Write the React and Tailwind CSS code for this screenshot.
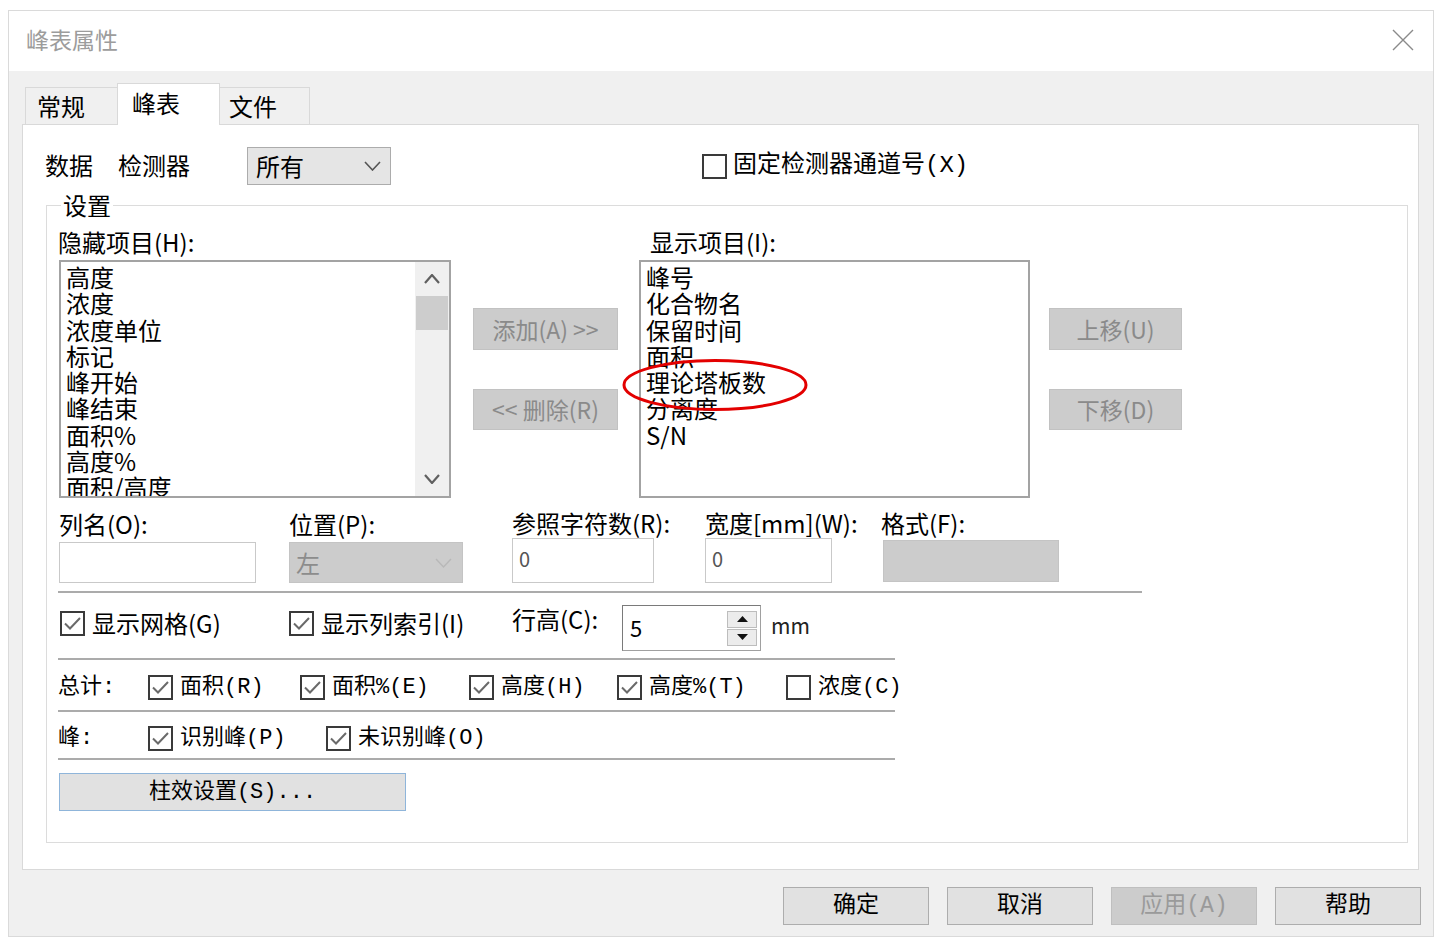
import React from "react";

const MONO = "font-['Liberation_Mono','Noto_Sans_CJK_SC',monospace]";

function CheckBox({ checked }) {
  return (
    <svg width="25" height="25" viewBox="0 0 25 25" className="shrink-0 block">
      <rect x="1" y="1" width="23" height="23" fill="white" stroke="#3a3a3a" strokeWidth="2" />
      {checked && (
        <path d="M5 12.5 L10 17.5 L20 7" fill="none" stroke="#6a6a6a" strokeWidth="2" />
      )}
    </svg>
  );
}

function Chevron({ dir = "down", color = "#555", w = 16, h = 9, sw = 1.6 }) {
  const d =
    dir === "down"
      ? `M1 1 L${w / 2} ${h - 1} L${w - 1} 1`
      : `M1 ${h - 1} L${w / 2} 1 L${w - 1} ${h - 1}`;
  return (
    <svg width={w} height={h} viewBox={`0 0 ${w} ${h}`} className="block">
      <path d={d} fill="none" stroke={color} strokeWidth={sw} />
    </svg>
  );
}

function ListBox({ items, scroll }) {
  return (
    <div className="h-[238px] border-2 border-[#a3a3a3] bg-white flex overflow-hidden">
      <div className="flex-1 pl-[5px] pt-[2px] text-[24px] leading-[26.3px] text-black overflow-hidden">
        {items.map((i) => (
          <div key={i} className="whitespace-nowrap">
            {i}
          </div>
        ))}
      </div>
      {scroll && (
        <div className="w-[34px] bg-[#f0f0f0] flex flex-col">
          <div className="h-[34px] flex items-center justify-center">
            <Chevron dir="up" color="#606060" w={16} h={10} sw={2.2} />
          </div>
          <div className="h-[34px] mx-[1px] bg-[#cdcdcd]" />
          <div className="flex-1" />
          <div className="h-[34px] flex items-center justify-center">
            <Chevron dir="down" color="#606060" w={16} h={10} sw={2.2} />
          </div>
        </div>
      )}
    </div>
  );
}

function GrayButton({ children, h }) {
  return (
    <div
      className={`w-full ${h} bg-[#cccccc] border border-[#c2c2c2] flex items-center justify-center text-[23px] text-[#8a8a8a]`}
    >
      {children}
    </div>
  );
}

function CheckLabel({ checked, label, mono, width }) {
  return (
    <div className={`flex items-center ${width} shrink-0`}>
      <CheckBox checked={checked} />
      <span
        className={`ml-[7px] whitespace-nowrap ${
          mono ? `${MONO} text-[22px]` : "text-[24px]"
        } text-black`}
      >
        {label}
      </span>
    </div>
  );
}

function FooterButton({ children, disabled }) {
  return (
    <div
      className={`w-[146px] h-[38px] flex items-center justify-center text-[23px] ${MONO} ${
        disabled
          ? "bg-[#cccccc] border border-[#bfbfbf] text-[#9a9a9a]"
          : "bg-[#e1e1e1] border border-[#adadad] text-black"
      }`}
    >
      {children}
    </div>
  );
}

const hiddenItems = [
  "高度",
  "浓度",
  "浓度单位",
  "标记",
  "峰开始",
  "峰结束",
  "面积%",
  "高度%",
  "面积/高度",
];

const shownItems = ["峰号", "化合物名", "保留时间", "面积", "理论塔板数", "分离度", "S/N"];

export default function App() {
  return (
    <div className="w-[1440px] h-[948px] bg-white pt-[10px] pl-[8px] font-['Noto_Sans_CJK_SC',sans-serif] text-black">
      <div className="w-[1426px] h-[927px] border border-[#dadada] bg-[#f0f0f0] flex flex-col">
        {/* title bar */}
        <div className="h-[60px] bg-white flex items-center justify-between pl-[17px] pr-[19px] shrink-0">
          <span className="text-[23px] text-[#9c9c9c] leading-none mb-[3px]">峰表属性</span>
          <svg width="22" height="22" viewBox="0 0 22 22" className="block mb-[2px]">
            <path d="M1 1 L21 21 M21 1 L1 21" stroke="#8a8a8a" strokeWidth="1.4" fill="none" />
          </svg>
        </div>

        {/* body */}
        <div className="flex-1 pl-[13px] pt-[12px]">
          {/* tabs */}
          <div className="flex items-end h-[41px] ml-[3px]">
            <div className="w-[93px] h-[37px] border border-b-0 border-[#d9d9d9] bg-[#f0f0f0] flex items-center pl-[11px] text-[24px] leading-none">
              常规
            </div>
            <div className="w-[103px] h-[42px] border border-b-0 border-[#d9d9d9] bg-white -ml-px -mb-px relative z-10 flex items-start pt-[4px] pl-[14px] text-[24px] leading-[30px]">
              峰表
            </div>
            <div className="w-[90px] h-[37px] border border-b-0 border-l-0 border-[#d9d9d9] bg-[#f0f0f0] flex items-center pl-[9px] text-[24px] leading-none">
              文件
            </div>
          </div>

          {/* tab page */}
          <div className="w-[1397px] h-[746px] border border-[#d9d9d9] bg-white flex flex-col">
            {/* data / detector row */}
            <div className="mt-[22px] h-[38px] flex items-center text-[24px]">
              <span className="ml-[22px] w-[48px] mb-[2px]">数据</span>
              <span className="ml-[25px] w-[72px] mb-[2px]">检测器</span>
              <div className="ml-[57px] w-[144px] h-[38px] bg-[#e5e5e5] border border-[#acacac] flex items-center justify-between pl-[8px] pr-[9px]">
                <span>所有</span>
                <Chevron dir="down" color="#555" w={17} h={10} sw={1.6} />
              </div>
              <div className="ml-[311px] flex items-center">
                <CheckBox checked={false} />
                <span className={`ml-[6px] ${MONO} text-[24px] whitespace-nowrap`}>
                  固定检测器通道号(X)
                </span>
              </div>
            </div>

            {/* settings group */}
            <div className="mt-[20px] ml-[23px] w-[1362px] h-[638px] border border-[#dcdcdc] relative">
              <span className="absolute left-[14px] top-[-16px] bg-white px-[2px] text-[24px] leading-[30px]">
                设置
              </span>

              {/* item lists */}
              <div className="pt-[20px] flex items-start">
                <div className="ml-[12px] w-[392px]">
                  <div className="h-[34px] leading-[32px] text-[24px] -ml-px">隐藏项目(H):</div>
                  <ListBox items={hiddenItems} scroll />
                </div>

                <div className="ml-[22px] w-[145px] pt-[82px] flex flex-col">
                  <GrayButton h="h-[42px]">添加(A) &gt;&gt;</GrayButton>
                  <div className="h-[39px]" />
                  <GrayButton h="h-[41px]">&lt;&lt; 删除(R)</GrayButton>
                </div>

                <div className="ml-[21px] w-[391px] relative">
                  <div className="h-[34px] leading-[32px] text-[24px] pl-[11px]">显示项目(I):</div>
                  <ListBox items={shownItems} />
                  <svg
                    width="190"
                    height="56"
                    viewBox="0 0 190 56"
                    className="absolute left-[-19px] top-[131px] pointer-events-none"
                  >
                    <ellipse
                      cx="95"
                      cy="28"
                      rx="91"
                      ry="24.5"
                      fill="none"
                      stroke="#e30000"
                      strokeWidth="3"
                    />
                  </svg>
                </div>

                <div className="ml-[19px] w-[133px] pt-[82px] flex flex-col">
                  <GrayButton h="h-[42px]">上移(U)</GrayButton>
                  <div className="h-[39px]" />
                  <GrayButton h="h-[41px]">下移(D)</GrayButton>
                </div>
              </div>

              {/* column fields */}
              <div className="mt-[11px] flex items-start text-[24px]">
                <div className="ml-[12px] w-[197px] flex flex-col">
                  <div className="h-[30px] leading-[30px] whitespace-nowrap">列名(O):</div>
                  <div className="mt-[3px] h-[41px] border border-[#c9c9c9] bg-white" />
                </div>
                <div className="ml-[33px] w-[174px] flex flex-col">
                  <div className="h-[30px] leading-[30px] whitespace-nowrap">位置(P):</div>
                  <div className="mt-[3px] h-[41px] bg-[#cccccc] border border-[#c4c4c4] flex items-center justify-between pl-[6px] pr-[10px] text-[#8c8c8c]">
                    <span>左</span>
                    <Chevron dir="down" color="#b8b8b8" w={17} h={10} sw={1.4} />
                  </div>
                </div>
                <div className="ml-[49px] w-[142px] flex flex-col">
                  <div className="h-[30px] leading-[28px] whitespace-nowrap">参照字符数(R):</div>
                  <div className="-mt-[1px] h-[45px] border border-[#c9c9c9] bg-white flex items-center pl-[6px] pb-[3px] text-[20px] text-[#555]">
                    0
                  </div>
                </div>
                <div className="ml-[51px] w-[127px] flex flex-col">
                  <div className="h-[30px] leading-[28px] whitespace-nowrap">宽度[mm](W):</div>
                  <div className="-mt-[1px] h-[45px] border border-[#c9c9c9] bg-white flex items-center pl-[6px] pb-[3px] text-[20px] text-[#555]">
                    0
                  </div>
                </div>
                <div className="ml-[49px] w-[178px] flex flex-col">
                  <div className="h-[30px] leading-[28px] whitespace-nowrap">格式(F):</div>
                  <div className="ml-[2px] mt-[1px] h-[42px] w-[176px] bg-[#cccccc] border border-[#c4c4c4]" />
                </div>
              </div>

              <div className="mt-[8px] ml-[11px] w-[1084px] h-[2px] bg-[#ababab]" />

              {/* grid / index / row height */}
              <div className="h-[65px] flex items-start">
                <div className="ml-[13px] mt-[14px] h-[32px] flex items-center">
                  <CheckLabel checked label="显示网格(G)" width="w-[229px]" />
                  <CheckLabel checked label="显示列索引(I)" width="w-[223px]" />
                </div>
                <div className="mt-[11px] w-[110px] h-[30px] leading-[30px] text-[24px]">行高(C):</div>
                <div className="mt-[12px] w-[139px] h-[46px] border border-[#a0a0a0] border-t-[#7a7a7a] border-l-[#7a7a7a] bg-white flex">
                  <div className="flex-1 flex items-center pl-[7px] pb-[2px] text-[22px]">5</div>
                  <div className="w-[30px] mr-[3px] flex flex-col justify-center gap-[1px] py-[3px]">
                    <div className="h-[17px] bg-[#ececec] border border-[#bdbdbd] flex items-center justify-center">
                      <svg width="11" height="6" viewBox="0 0 11 6" className="block">
                        <path d="M0 6 L5.5 0 L11 6 Z" fill="#111" />
                      </svg>
                    </div>
                    <div className="h-[17px] bg-[#ececec] border border-[#bdbdbd] flex items-center justify-center">
                      <svg width="11" height="6" viewBox="0 0 11 6" className="block">
                        <path d="M0 0 L11 0 L5.5 6 Z" fill="#111" />
                      </svg>
                    </div>
                  </div>
                </div>
                <div className="mt-[17px] ml-[10px] h-[30px] leading-[30px] text-[21px] text-[#222]">mm</div>
              </div>

              <div className="ml-[11px] w-[837px] h-[2px] bg-[#ababab]" />

              {/* totals */}
              <div className="h-[50px] flex items-center pt-[5px]">
                <span className={`ml-[11px] w-[90px] shrink-0 ${MONO} text-[22px]`}>总计:</span>
                <CheckLabel checked mono label="面积(R)" width="w-[152px]" />
                <CheckLabel checked mono label="面积%(E)" width="w-[169px]" />
                <CheckLabel checked mono label="高度(H)" width="w-[148px]" />
                <CheckLabel checked mono label="高度%(T)" width="w-[169px]" />
                <CheckLabel checked={false} mono label="浓度(C)" width="w-[130px]" />
              </div>

              <div className="ml-[11px] w-[837px] h-[2px] bg-[#ababab]" />

              {/* peaks */}
              <div className="h-[46px] flex items-center pt-[7px]">
                <span className={`ml-[11px] w-[90px] shrink-0 ${MONO} text-[22px]`}>峰:</span>
                <CheckLabel checked mono label="识别峰(P)" width="w-[178px]" />
                <CheckLabel checked mono label="未识别峰(O)" width="w-[200px]" />
              </div>

              <div className="ml-[11px] w-[837px] h-[2px] bg-[#ababab]" />

              <div
                className={`mt-[13px] ml-[12px] w-[347px] h-[38px] bg-[#e1e1e1] border border-[#8fb5da] flex items-center justify-center ${MONO} text-[22px]`}
              >
                柱效设置(S)...
              </div>
            </div>
          </div>

          {/* dialog buttons */}
          <div className="mt-[17px] flex justify-end gap-[18px] pr-[12px]">
            <FooterButton>确定</FooterButton>
            <FooterButton>取消</FooterButton>
            <FooterButton disabled>应用(A)</FooterButton>
            <FooterButton>帮助</FooterButton>
          </div>
        </div>
      </div>
    </div>
  );
}
